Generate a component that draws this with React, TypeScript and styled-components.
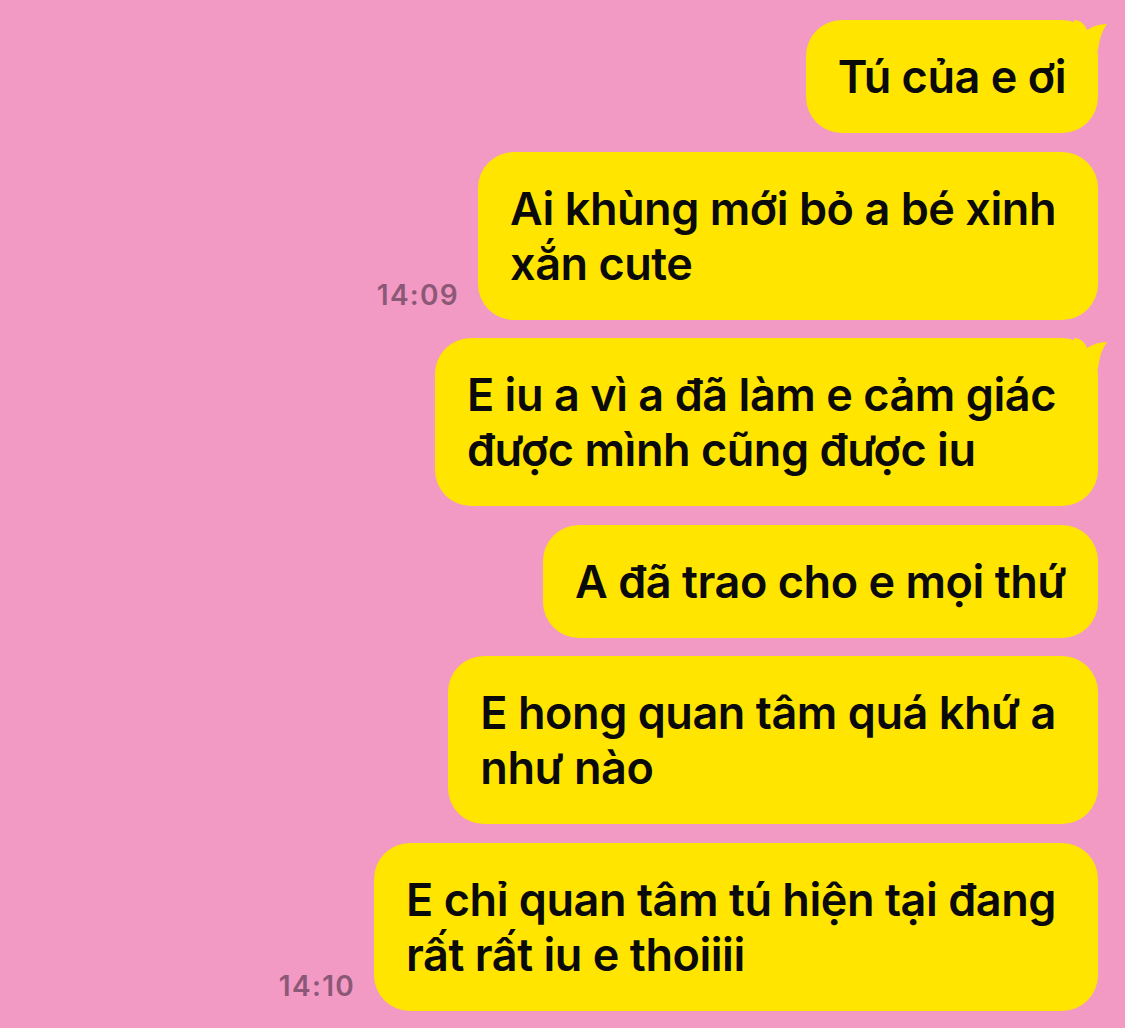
import React from "react";
import styled, { createGlobalStyle } from "styled-components";

const GlobalStyle = createGlobalStyle`
  html, body {
    margin: 0;
    padding: 0;
    background: #f29ac3;
  }
  body {
    font-family: Inter, "Noto Sans", "Liberation Sans", sans-serif;
  }
`;

const Chat = styled.main`
  width: 1125px;
  height: 1028px;
  box-sizing: border-box;
  padding: 20px 27px 0 0;
  display: flex;
  flex-direction: column;
  align-items: flex-end;
  gap: 18.5px;
  background: #f29ac3;
  overflow: hidden;
`;

const Row = styled.div`
  display: flex;
  justify-content: flex-end;
  align-items: flex-end;
  gap: 19px;
`;

const Time = styled.span`
  font-family: Inter, "Noto Sans", sans-serif;
  font-size: 28px;
  font-weight: 600;
  color: #8c5878;
  margin-bottom: 8px;
  letter-spacing: 1.3px;
`;

const Bubble = styled.div<{ $wide?: boolean }>`
  position: relative;
  background: #ffe500;
  border-radius: 36px;
  padding: 29px ${(p) => (p.$wide ? 42 : 32)}px 29px 32px;
  font-size: 45px;
  font-weight: 600;
  line-height: 55px;
  color: #0a0a0a;
  white-space: nowrap;
  letter-spacing: -0.45px;
`;

const Tail = styled.svg`
  position: absolute;
  top: 0;
  right: -10px;
  width: 34px;
  height: 30px;
  overflow: visible;
`;

const BubbleTail = () => (
  <Tail viewBox="0 0 34 30" aria-hidden>
    <path d="M0,0 Q9,0 13,10 Q22,4 33,4 Q26,13 24,30 L0,30 Z" fill="#ffe500" />
  </Tail>
);

type Msg = { lines: string[]; time?: string; tail?: boolean };

const messages: Msg[] = [
  { lines: ["Tú của e ơi"], tail: true },
  { lines: ["Ai khùng mới bỏ a bé xinh", "xắn cute"], time: "14:09" },
  { lines: ["E iu a vì a đã làm e cảm giác", "được mình cũng được iu"], tail: true },
  { lines: ["A đã trao cho e mọi thứ"] },
  { lines: ["E hong quan tâm quá khứ a", "như nào"] },
  { lines: ["E chỉ quan tâm tú hiện tại đang", "rất rất iu e thoiiii"], time: "14:10" },
];

export default function App() {
  return (
    <>
      <GlobalStyle />
      <Chat>
        {messages.map((m, i) => (
          <Row key={i}>
            {m.time && <Time>{m.time}</Time>}
            <Bubble $wide={m.lines.length > 1}>
              {m.tail && <BubbleTail />}
              {m.lines.map((l, j) => (
                <React.Fragment key={j}>
                  {j > 0 && <br />}
                  {l}
                </React.Fragment>
              ))}
            </Bubble>
          </Row>
        ))}
      </Chat>
    </>
  );
}
